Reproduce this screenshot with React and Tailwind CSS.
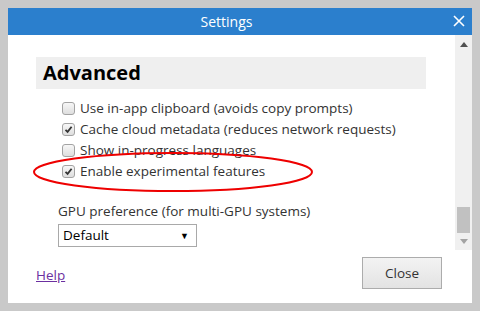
const font = { fontFamily: '"Open Sans", "Noto Sans", sans-serif' };

function Checkbox({ checked }) {
  return (
    <span className="w-[13px] h-[13px] rounded-[3px] border border-[#a3a3a3] bg-gradient-to-b from-[#f7f7f7] to-[#dedede] flex items-center justify-center shrink-0">
      {checked && (
        <svg width="9" height="9" viewBox="0 0 9 9">
          <path d="M1.5 4.8 L3.6 6.8 L7.6 1.8" fill="none" stroke="#333" strokeWidth="1.8" />
        </svg>
      )}
    </span>
  );
}

function Option({ checked, label }) {
  return (
    <div className="h-[21px] flex items-center gap-[5px] pl-[26px]">
      <Checkbox checked={checked} />
      <span className="text-[13.5px] text-[#333]">{label}</span>
    </div>
  );
}

export default function App() {
  return (
    <div className="w-[480px] h-[311px] bg-[#c9c9c9] p-[8px] relative" style={font}>
      <div className="h-full bg-white flex flex-col">
        {/* title bar */}
        <div className="h-[27px] bg-[#2b7fcd] relative flex items-center justify-center pr-[27px]">
          <span className="text-white text-[14px]">Settings</span>
          <svg className="absolute right-[7px] top-[7px]" width="12" height="12" viewBox="0 0 12 12">
            <path d="M1 1 L11 11 M11 1 L1 11" stroke="#fff" strokeWidth="1.6" />
          </svg>
        </div>

        {/* body */}
        <div className="h-[215px] flex">
          <div className="flex-1 overflow-hidden pl-[28px] pr-[29px] pt-[22px]">
            <div className="h-[32px] bg-[#efefef] flex items-center px-[7px]">
              <span className="text-[20px] font-bold text-black">Advanced</span>
            </div>
            <div className="mt-[9px]">
              <Option label="Use in-app clipboard (avoids copy prompts)" />
              <Option checked label="Cache cloud metadata (reduces network requests)" />
              <Option label="Show in-progress languages" />
              <Option checked label="Enable experimental features" />
            </div>
            <div className="mt-[20px] pl-[22px]">
              <div className="h-[18px] flex items-center text-[13.5px] text-[#333]">
                GPU preference (for multi-GPU systems)
              </div>
              <div className="mt-[4px] w-[139px] h-[23px] border border-[#a9a9a9] flex items-center justify-between pl-[4px] pr-[7px]">
                <span className="text-[13.5px] text-black">Default</span>
                <span className="text-[9px] text-black">▼</span>
              </div>
            </div>
          </div>

          {/* scrollbar */}
          <div className="w-[17px] bg-[#f0f0f0] flex flex-col items-center">
            <svg className="mt-[7px]" width="8" height="5" viewBox="0 0 8 5">
              <path d="M0 5 L4 0 L8 5 Z" fill="#505050" />
            </svg>
            <div className="flex-1" />
            <div className="w-[13px] h-[26px] bg-[#c1c1c1]" />
            <svg className="mt-[6px] mb-[6px]" width="8" height="5" viewBox="0 0 8 5">
              <path d="M0 0 L8 0 L4 5 Z" fill="#a3a3a3" />
            </svg>
          </div>
        </div>

        {/* footer */}
        <div className="flex-1 flex items-start justify-between pl-[28px] pr-[30px] pt-[7px]">
          <a className="mt-[8px] text-[13.5px] text-[#6b2fa0] underline">Help</a>
          <button className="w-[80px] h-[32px] border border-[#acacac] bg-gradient-to-b from-[#f3f3f3] to-[#e3e3e3] text-[13.5px] text-[#333]">
            Close
          </button>
        </div>
      </div>

      {/* annotation */}
      <svg className="absolute left-[31px] top-[151px]" width="284" height="44" viewBox="0 0 284 44">
        <ellipse cx="142" cy="21" rx="139" ry="19" fill="none" stroke="#ee0000" strokeWidth="2" />
      </svg>
    </div>
  );
}
